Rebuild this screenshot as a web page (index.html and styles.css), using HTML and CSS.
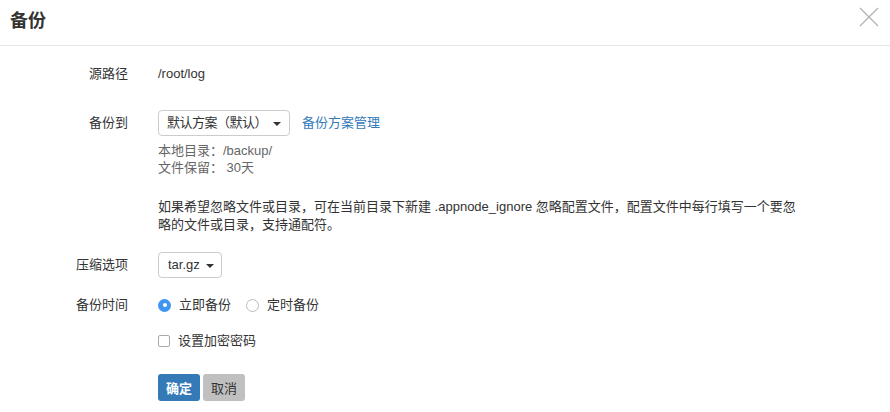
FILE: index.html
```html
<!DOCTYPE html>
<html lang="zh-CN">
<head>
    <meta charset="UTF-8">
    <title>备份</title>
    <link rel="stylesheet" href="styles.css">
</head>
<body>
<div class="modal">
    <header class="modal-header">
        <h3>备份</h3>
        <button class="close" aria-label="关闭">
            <svg width="20" height="20" viewBox="0 0 20 20">
                <path d="M1 1 L19 19 M19 1 L1 19" stroke="#b3b3b3" stroke-width="1.3" fill="none"/>
            </svg>
        </button>
    </header>

    <form class="modal-body">
        <div class="row row-path">
            <label>源路径</label>
            <div class="value">/root/log</div>
        </div>

        <div class="row row-target">
            <label>备份到</label>
            <div class="value inline">
                <span class="select wide"><span class="tight">默认方案（默认）</span><i class="caret"></i></span>
                <a href="#" class="link">备份方案管理</a>
            </div>
        </div>

        <div class="row row-hint">
            <span></span>
            <div class="hint">
                <div>本地目录：/backup/</div>
                <div>文件保留： 30天</div>
            </div>
        </div>

        <div class="row row-note">
            <span></span>
            <p class="note">如果希望忽略文件或目录，可在当前目录下新建 .appnode_ignore 忽略配置文件，配置文件中每行填写一个要忽略的文件或目录，支持通配符。</p>
        </div>

        <div class="row row-compress">
            <label>压缩选项</label>
            <div class="value">
                <span class="select">tar.gz<i class="caret"></i></span>
            </div>
        </div>

        <div class="row row-time">
            <label>备份时间</label>
            <div class="value inline">
                <span class="radio checked"></span><span class="opt">立即备份</span>
                <span class="radio"></span><span class="opt">定时备份</span>
            </div>
        </div>

        <div class="row row-check">
            <span></span>
            <div class="value inline">
                <span class="checkbox"></span><span class="opt">设置加密密码</span>
            </div>
        </div>

        <div class="row row-actions">
            <span></span>
            <div class="value inline">
                <button type="button" class="btn btn-primary">确定</button>
                <button type="button" class="btn btn-default">取消</button>
            </div>
        </div>
    </form>
</div>
</body>
</html>
```

FILE: styles.css
```css
body {
    margin: 0;
    background: #fff;
    color: #333;
    font-family: "Helvetica Neue", "Liberation Sans", "Noto Sans CJK SC", sans-serif;
    font-size: 13px;
}

.modal-header {
    height: 45px;
    border-bottom: 1px solid #e5e5e5;
    display: flex;
    align-items: center;
    justify-content: space-between;
    padding: 0 11px 0 10px;
}

.modal-header h3 {
    margin: 0;
    font-size: 18px;
    font-weight: 600;
    color: #333;
    position: relative;
    top: -4px;
}

.close {
    border: none;
    background: none;
    padding: 0;
    width: 20px;
    height: 20px;
    position: relative;
    top: -6px;
}

.modal-body {
    padding-top: 18px;
}

.row {
    display: grid;
    grid-template-columns: 128px 1fr;
    column-gap: 30px;
    align-items: center;
}

.row label {
    text-align: right;
    line-height: 20px;
}

.value {
    line-height: 20px;
}

.inline {
    display: flex;
    align-items: center;
}

.row-target {
    margin-top: 26px;
}

.row-hint {
    margin-top: 6px;
}

.hint {
    color: #666;
    line-height: 17px;
}

.row-note {
    margin-top: 22px;
}

.note {
    margin: 0;
    width: 648px;
    line-height: 18px;
}

.row-compress {
    margin-top: 18px;
}

.row-time {
    margin-top: 17px;
}

.row-check {
    margin-top: 16px;
}

.row-actions {
    margin-top: 23px;
}

.select {
    display: inline-flex;
    align-items: center;
    box-sizing: border-box;
    height: 26px;
    padding: 0 7px 0 9px;
    border: 1px solid #ccc;
    border-radius: 4px;
    background: #fff;
    white-space: nowrap;
}

.select.wide {
    width: 132px;
    justify-content: space-between;
    padding-right: 11px;
}

.tight {
    letter-spacing: -0.5px;
    margin-left: -1px;
}

.caret {
    display: inline-block;
    margin-left: 6px;
    border-top: 4px solid #333;
    border-left: 4px solid transparent;
    border-right: 4px solid transparent;
    position: relative;
    top: 1px;
}

.link {
    color: #337ab7;
    text-decoration: none;
    margin-left: 12px;
}

.radio {
    box-sizing: border-box;
    width: 13px;
    height: 13px;
    border: 1px solid #bbb;
    border-radius: 50%;
    background: #fff;
}

.radio.checked {
    border: none;
    background: #3f95f1;
    position: relative;
}

.radio.checked::after {
    content: "";
    position: absolute;
    left: 4.5px;
    top: 4.5px;
    width: 4px;
    height: 4px;
    border-radius: 50%;
    background: #fff;
}

.opt {
    margin-left: 8px;
    margin-right: 15px;
}

.checkbox {
    box-sizing: border-box;
    width: 12px;
    height: 12px;
    border: 1px solid #aaa;
    border-radius: 2px;
    background: #fff;
}

.btn {
    box-sizing: border-box;
    height: 27px;
    padding: 0 8px;
    border: none;
    border-radius: 3px;
    font-family: inherit;
    font-size: 13px;
    margin-right: 3px;
}

.btn-primary {
    background: #337ab7;
    color: #fff;
    font-weight: bold;
}

.btn-default {
    background: #c0c0c0;
    color: #333;
}
```
